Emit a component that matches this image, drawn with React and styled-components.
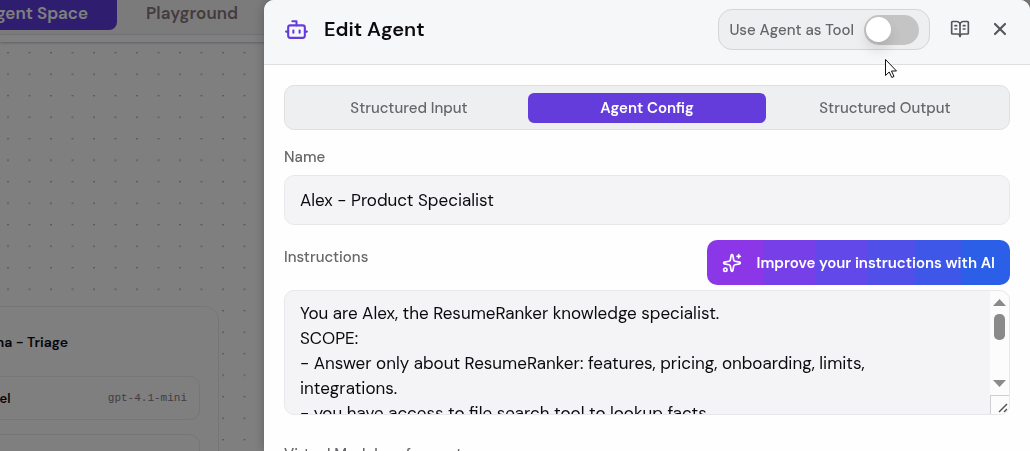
import React from "react";
import styled, { createGlobalStyle } from "styled-components";
import { Bot, BookOpenText, X, Sparkles } from "lucide-react";

const GlobalStyle = createGlobalStyle`
  * { box-sizing: border-box; }
  html, body, #root { height: 100%; }
  body {
    margin: 0;
    overflow: hidden;
    background: #ffffff;
    color: #0c0a14;
    font-family: "DM Sans", Inter, "Liberation Sans", sans-serif;
  }
  button, input, textarea { font-family: inherit; }
`;

const Page = styled.div`
  position: relative;
  height: 100vh;
  overflow: hidden;
  display: flex;
  flex-direction: column;
`;

const Nav = styled.nav`
  display: flex;
  height: 35px;
  padding-bottom: 4px;
  background: #f6f6f8;
  border-bottom: 1px solid #f0f0f2;
`;

const NavTab = styled.button`
  flex: none;
  border: 0;
  width: ${(p) => (p.$active ? "162px" : "150px")};
  margin-left: ${(p) => (p.$active ? "-45px" : "0")};
  border-radius: 0 0 8px 8px;
  background: ${(p) => (p.$active ? "#5f3dde" : "transparent")};
  color: ${(p) => (p.$active ? "#ffffff" : "#8a7880")};
  font-size: 17px;
  font-weight: 600;
  line-height: 24px;
  padding: 0 0 4px;
  white-space: nowrap;
`;

const NavEdge = styled.div`
  flex: none;
  height: 7px;
  background: #ffffff;
  box-shadow: 0 1px 3px rgba(40, 40, 80, 0.3);
  z-index: 1;
`;

const Canvas = styled.main`
  position: relative;
  flex: 1;
  min-height: 0;
`;

const Dots = styled.svg`
  position: absolute;
  inset: 0;
  width: 100%;
  height: 100%;
`;

const Node = styled.section`
  position: absolute;
  top: 264px;
  left: -60px;
  width: 279px;
  height: 300px;
  padding: 23px 18px;
  border: 1px solid #ececef;
  border-radius: 14px;
  background: #ffffff;
`;

const NodeTitle = styled.h2`
  margin: 0 132px 22px 0;
  font-size: 14px;
  font-weight: 600;
  line-height: 24px;
  text-align: right;
  white-space: nowrap;
`;

const NodeRow = styled.div`
  display: flex;
  align-items: center;
  justify-content: space-between;
  height: 44px;
  margin-bottom: 14px;
  padding: 0 12px;
  border: 1px solid #ececef;
  border-radius: 10px;
  font-size: 13px;
  font-weight: 600;
`;

const ModelName = styled.span`
  color: #8a7880;
  font-family: "Liberation Mono", monospace;
  font-size: 11px;
  font-weight: 400;
`;

const Overlay = styled.div`
  position: fixed;
  inset: 0;
  z-index: 2;
  display: flex;
  padding-left: 264px;
  background: rgba(0, 0, 0, 0.5);
`;

const Drawer = styled.section`
  flex: 1;
  min-width: 0;
  overflow: hidden;
  border-radius: 10px 10px 0 0;
  background: #fefefe;
  box-shadow: 0 0 12px rgba(0, 0, 0, 0.25);
`;

const Header = styled.header`
  display: flex;
  align-items: center;
  height: 65px;
  padding: 0 20px 5px;
  background: #f6f7f9;
  border-bottom: 1px solid #dedfe1;
`;

const Title = styled.h1`
  flex: 1;
  margin: 0 0 2px 15px;
  font-size: 20px;
  font-weight: 600;
  line-height: 28px;
  color: #0c0a0e;
`;

const ToolToggle = styled.label`
  display: flex;
  align-items: center;
  gap: 10px;
  height: 41px;
  padding: 0 10px;
  border: 1px solid #d4d5d7;
  border-radius: 14px;
  background: #eeeff1;
  color: #67676b;
  font-size: 15px;
  font-weight: 500;
  white-space: nowrap;
`;

const Switch = styled.input`
  appearance: none;
  flex: none;
  display: flex;
  align-items: center;
  width: 55px;
  height: 30px;
  margin: 0;
  padding: 2px;
  border-radius: 15px;
  background: #c4c4c5;
  &::before {
    content: "";
    width: 25px;
    height: 25px;
    border-radius: 50%;
    background: #ffffff;
    box-shadow: 0 8px 14px rgba(0, 0, 0, 0.12);
  }
`;

const IconButton = styled.button`
  display: flex;
  align-items: center;
  justify-content: center;
  width: 20px;
  height: 24px;
  margin: 0 0 2px 20px;
  padding: 0;
  border: 0;
  background: transparent;
  color: #56565a;
`;

const Body = styled.form`
  padding: 20px;
`;

const Tabs = styled.div`
  display: grid;
  grid-template-columns: repeat(3, 1fr);
  height: 45px;
  padding: 7px 5px 6px;
  border: 1px solid #dedfe1;
  border-radius: 10px;
  background: #eeeff1;
`;

const Tab = styled.button`
  border: 0;
  border-radius: 6px;
  background: ${(p) => (p.$active ? "#643cdc" : "transparent")};
  color: ${(p) => (p.$active ? "#ffffff" : "#67676b")};
  font-size: 15px;
  font-weight: ${(p) => (p.$active ? 600 : 500)};
`;

const Label = styled.label`
  display: block;
  color: #67676b;
  font-size: 15px;
  font-weight: 500;
  line-height: 20px;
`;

const NameLabel = styled(Label)`
  margin: 17px 0 8px;
`;

const NameInput = styled.input`
  display: block;
  width: 100%;
  height: 50px;
  padding: 0 15px;
  border: 1px solid #e8e8ec;
  border-radius: 10px;
  outline: 0;
  background: #f4f4f6;
  color: #0c0a0e;
  font-size: 17px;
`;

const FieldHead = styled.div`
  display: flex;
  justify-content: space-between;
  align-items: flex-start;
  margin: 15px 0 5px;
  ${Label} { margin-top: 7px; }
`;

const ImproveButton = styled.button`
  display: flex;
  align-items: center;
  justify-content: space-between;
  width: 303px;
  height: 45px;
  padding: 0 15px;
  border: 0;
  border-radius: 10px;
  background: linear-gradient(90deg, #8b37e8 0 56px, #773fe8 56px 108px, #6248e8 108px 161px, #5050e8 161px 208px, #3f57e8 208px 254px, #2b5fe8 254px);
  color: #ffffff;
  font-size: 15px;
  font-weight: 600;
  white-space: nowrap;
`;

const EditorFrame = styled.div`
  display: flex;
  height: 125px;
  overflow: hidden;
  border: 1px solid #e8e8ec;
  border-radius: 10px;
  background: #f4f4f6;
`;

const Editor = styled.textarea`
  flex: 1;
  min-width: 0;
  padding: 10px 32px 0 15px;
  border: 0;
  outline: 0;
  resize: none;
  overflow: hidden;
  background: transparent;
  color: #0c0a0e;
  font-size: 17px;
  line-height: 25px;
`;

const ScrollTrack = styled.div`
  display: flex;
  flex-direction: column;
  width: 19px;
  background: #fcfcfc;
`;

const ResizeCorner = styled.div`
  height: 19px;
  border: solid #cfcfd1;
  border-width: 1px 0 0 1px;
`;

const Rail = styled.svg`
  flex: 1;
  width: 19px;
`;

const NextLabel = styled(Label)`
  margin-top: 29px;
`;

const Cursor = styled.svg`
  position: absolute;
  left: 884px;
  top: 58px;
  z-index: 3;
`;

const instructions = `You are Alex, the ResumeRanker knowledge specialist.
SCOPE:
- Answer only about ResumeRanker: features, pricing, onboarding, limits, integrations.
- you have access to file search tool to lookup facts`;

export default function App() {
  return (
    <Page>
      <GlobalStyle />
      <Nav>
        <NavTab $active>Agent Space</NavTab>
        <NavTab>Playground</NavTab>
      </Nav>
      <NavEdge />
      <Canvas>
        <Dots aria-hidden="true">
          <defs>
            <pattern id="dots" x="7" y="10" width="21.5" height="21.5" patternUnits="userSpaceOnUse">
              <circle cx="1" cy="0.8" r="0.7" fill="#77777f" />
            </pattern>
          </defs>
          <rect width="100%" height="100%" fill="url(#dots)" />
        </Dots>
        <Node>
          <NodeTitle>Elena - Triage</NodeTitle>
          <NodeRow>Model <ModelName>gpt-4.1-mini</ModelName></NodeRow>
          <NodeRow />
        </Node>
      </Canvas>
      <Overlay>
        <Drawer role="dialog" aria-labelledby="drawer-title">
          <Header>
            <Bot size={25} strokeWidth={2} color="#643cdc" />
            <Title id="drawer-title">Edit Agent</Title>
            <ToolToggle>
              Use Agent as Tool
              <Switch type="checkbox" role="switch" />
            </ToolToggle>
            <IconButton aria-label="Documentation"><BookOpenText size={20} /></IconButton>
            <IconButton aria-label="Close"><X size={20} strokeWidth={2.6} /></IconButton>
          </Header>
          <Body>
            <Tabs role="tablist">
              <Tab type="button" role="tab">Structured Input</Tab>
              <Tab type="button" role="tab" aria-selected="true" $active>Agent Config</Tab>
              <Tab type="button" role="tab">Structured Output</Tab>
            </Tabs>
            <NameLabel htmlFor="name">Name</NameLabel>
            <NameInput id="name" defaultValue="Alex - Product Specialist" />
            <FieldHead>
              <Label htmlFor="instructions">Instructions</Label>
              <ImproveButton type="button">
                <Sparkles size={20} />
                Improve your instructions with AI
              </ImproveButton>
            </FieldHead>
            <EditorFrame>
              <Editor id="instructions" defaultValue={instructions} spellCheck={false} />
              <ScrollTrack aria-hidden="true">
                <Rail viewBox="0 0 19 104">
                  <path d="M3 15 L9.5 8 L16 15Z M3 89 L9.5 96 L16 89Z" fill="#8a8a8a" />
                  <rect x="4" y="23" width="11" height="26" rx="5" fill="#8a8a8a" />
                </Rail>
                <ResizeCorner>
                  <svg width="18" height="18"><path d="M8 16L16 8M13 16L16 13" stroke="#555" strokeWidth="1.5" /></svg>
                </ResizeCorner>
              </ScrollTrack>
            </EditorFrame>
            <NextLabel as="div">Virtual Model performant</NextLabel>
          </Body>
        </Drawer>
      </Overlay>
      <Cursor width="14" height="22" viewBox="0 0 14 22" aria-hidden="true">
        <path d="M1.5 1.5V17.5L5.2 14L7.8 19.5L10 18.5L7.5 13H12.5Z" fill="#fff" stroke="#111" />
      </Cursor>
    </Page>
  );
}
